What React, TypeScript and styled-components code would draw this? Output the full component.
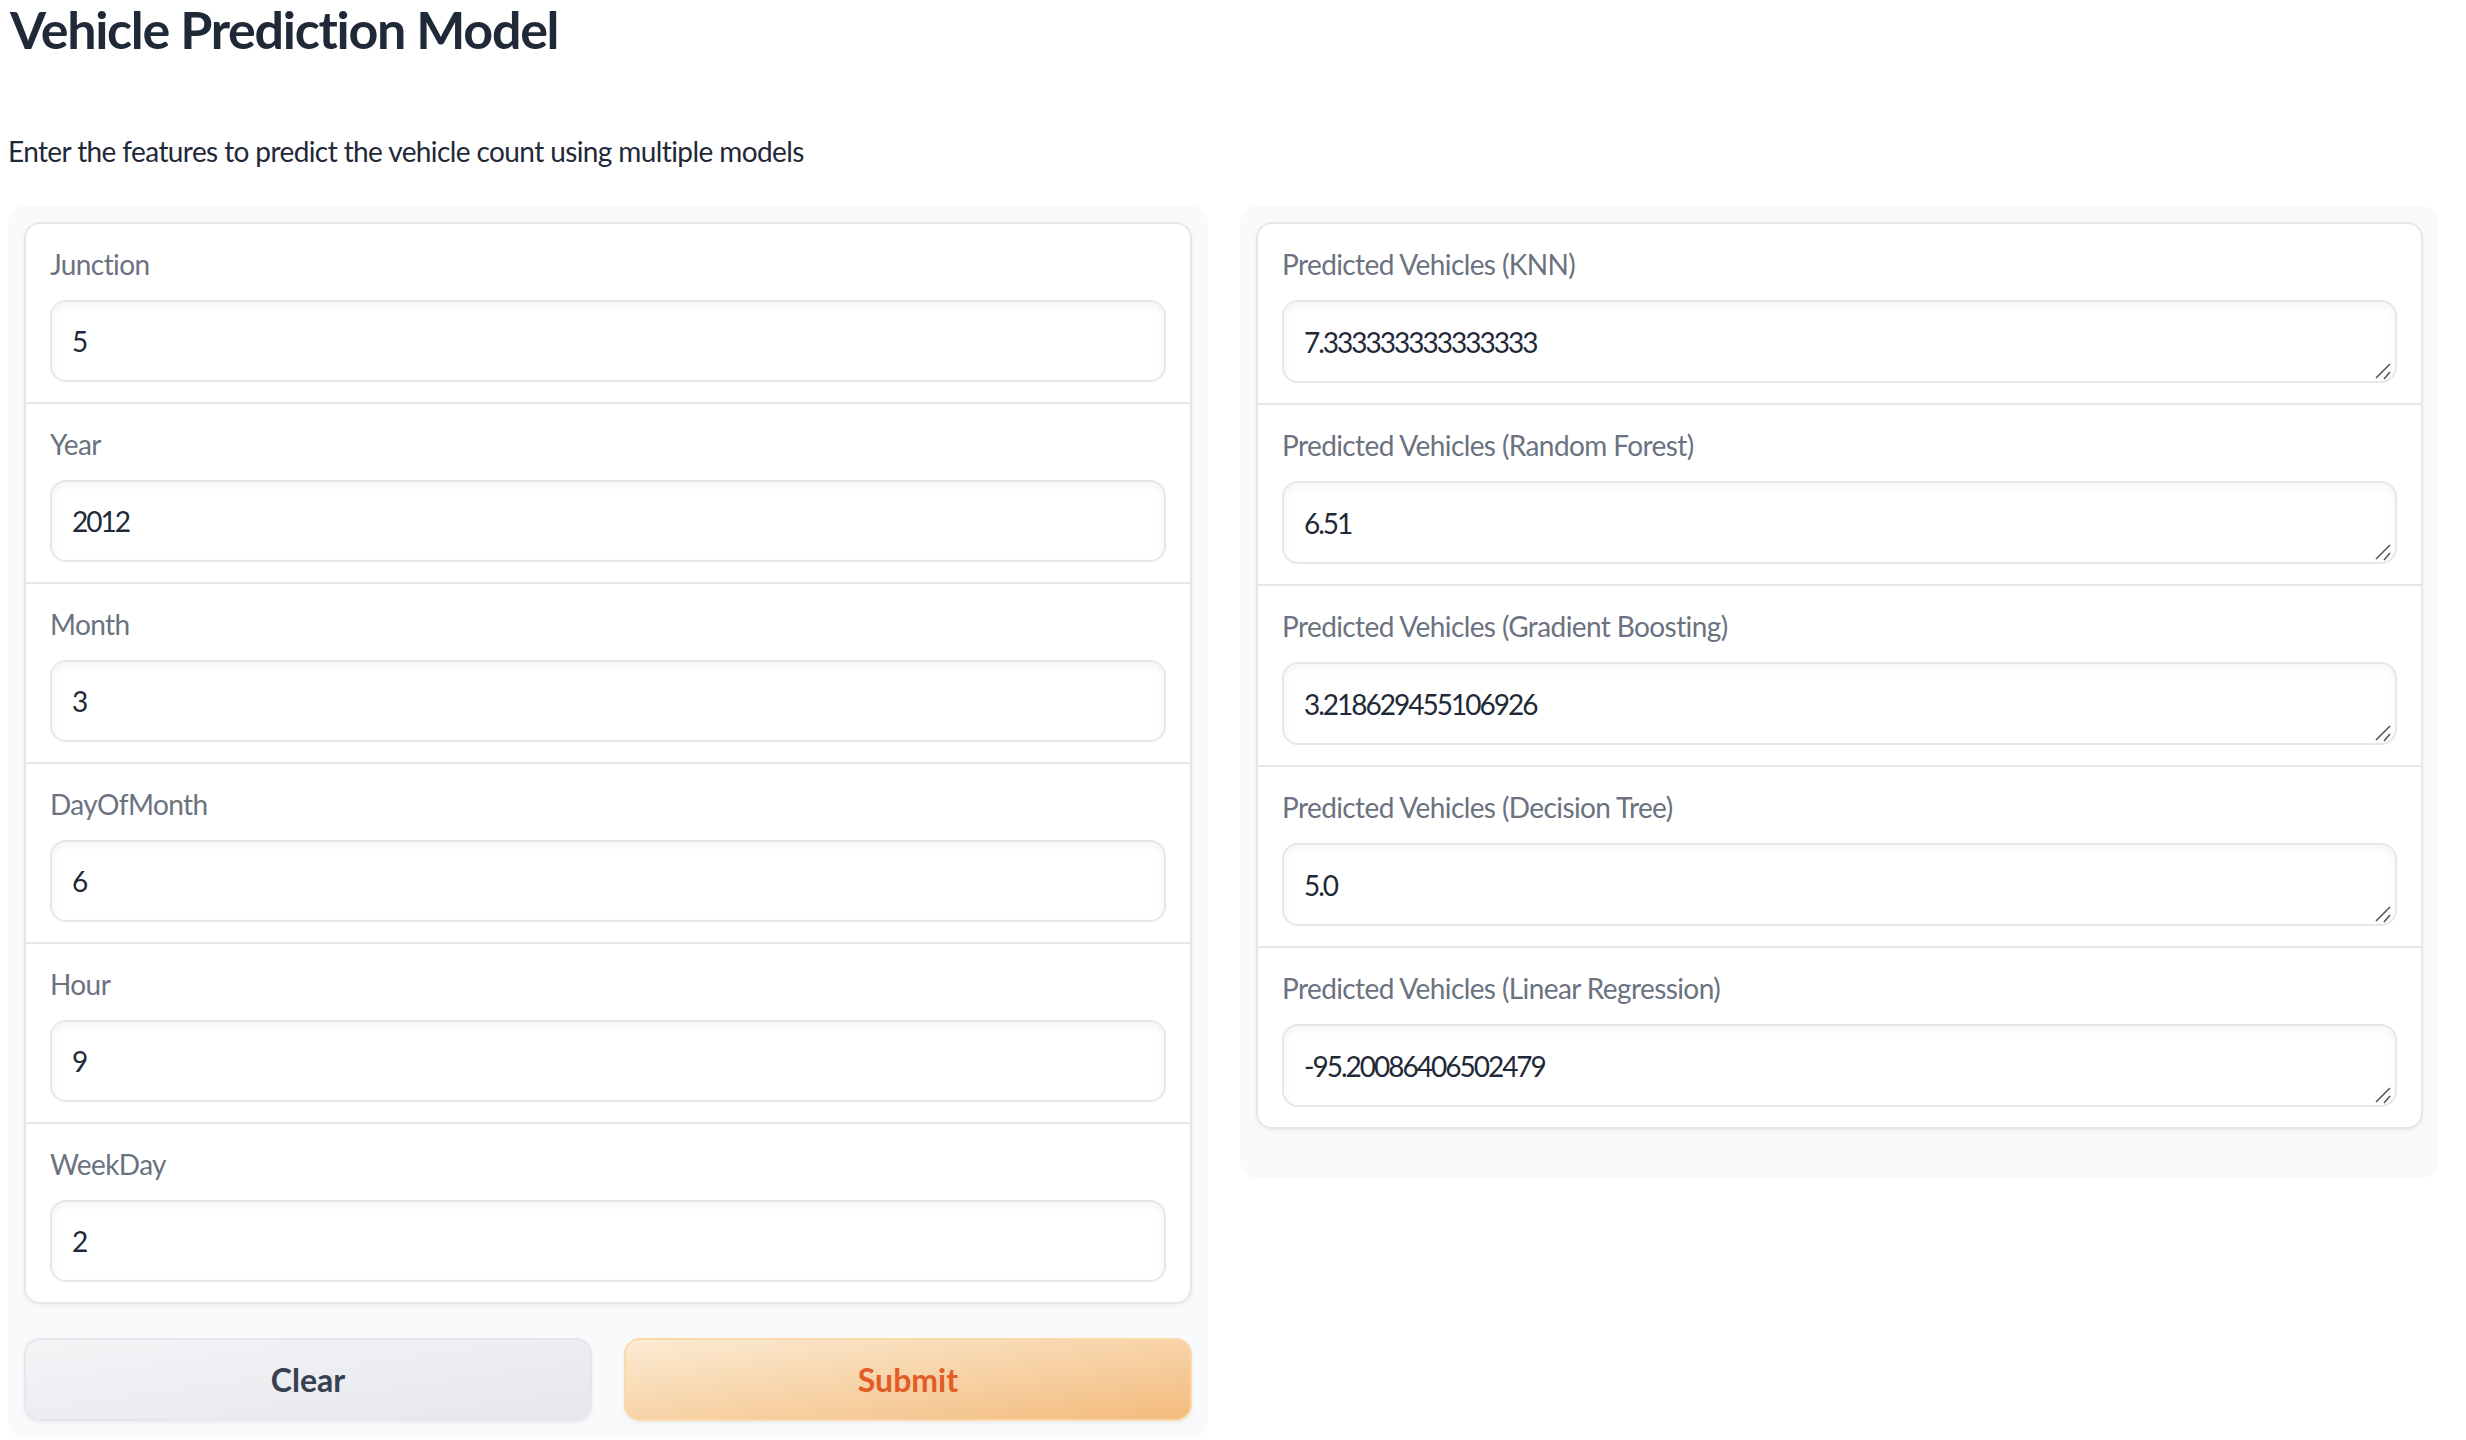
import React from "react";
import styled, { createGlobalStyle } from "styled-components";

const GlobalStyle = createGlobalStyle`
  body {
    margin: 0;
    background: #ffffff;
    font-family: "Lato", "Noto Sans", sans-serif;
    color: #1f2937;
  }
  * {
    box-sizing: border-box;
  }
`;

const Page = styled.div`
  padding: 0 27px 0 8px;
`;

const Title = styled.h1`
  margin: 0 0 0 2px;
  font-size: 52px;
  line-height: 58px;
  font-weight: 700;
  letter-spacing: -1.3px;
  color: #1f2937;
`;

const Description = styled.p`
  margin: 73px 0 35px;
  font-size: 28px;
  line-height: 40px;
  letter-spacing: -0.6px;
  color: #1f2937;
`;

const Columns = styled.div`
  display: grid;
  grid-template-columns: 1200px 1199px;
  gap: 32px;
  align-items: start;
`;

const Panel = styled.div<{ $bottom?: number }>`
  background: #f9fafb;
  border-radius: 16px;
  padding: 16px 16px ${(p) => p.$bottom ?? 16}px;
  display: flex;
  flex-direction: column;
  gap: 34px;
`;

const Card = styled.div`
  background: #ffffff;
  border: 2px solid #e5e7eb;
  border-radius: 16px;
  box-shadow: 0 2px 4px rgba(0, 0, 0, 0.05);
  overflow: hidden;
`;

const Field = styled.div`
  padding: 20px 24px;
  & + & {
    border-top: 2px solid #e5e7eb;
  }
`;

const Label = styled.div`
  font-size: 28px;
  line-height: 40px;
  letter-spacing: -0.6px;
  color: #6b7280;
  margin-bottom: 16px;
`;

const inputLook = `
  display: block;
  width: 100%;
  border: 2px solid #e5e7eb;
  border-radius: 16px;
  background: #ffffff;
  box-shadow: inset 0 4px 8px rgba(0, 0, 0, 0.04);
  font-family: "Lato", "Noto Sans", sans-serif;
  font-size: 28px;
  line-height: 40px;
  letter-spacing: -2px;
  color: #1f2937;
  outline: none;
`;

const TextInput = styled.input`
  ${inputLook}
  height: 82px;
  padding: 0 20px;
`;

const AreaWrap = styled.div`
  position: relative;
`;

const Area = styled.textarea`
  ${inputLook}
  height: 83px;
  padding: 20px 20px 19px;
  resize: none;
  overflow: hidden;
`;

const Grip = styled.svg`
  position: absolute;
  right: 3px;
  bottom: 2px;
  width: 20px;
  height: 20px;
  pointer-events: none;
`;

const Buttons = styled.div`
  display: grid;
  grid-template-columns: 1fr 1fr;
  gap: 32px;
`;

const Button = styled.button<{ $primary?: boolean }>`
  height: 83px;
  border-radius: 16px;
  border: 2px solid ${(p) => (p.$primary ? "#fbd9ab" : "#e5e7eb")};
  background: ${(p) =>
    p.$primary
      ? "linear-gradient(to bottom right, #fcebd3, #f3bb7d)"
      : "linear-gradient(to bottom right, #f3f4f6, #e5e7eb)"};
  color: ${(p) => (p.$primary ? "#e35b25" : "#374151")};
  box-shadow: 0 2px 4px rgba(0, 0, 0, 0.06);
  font-family: "Lato", "Noto Sans", sans-serif;
  font-size: 32px;
  font-weight: 700;
  cursor: pointer;
`;

const inputs = [
  { label: "Junction", value: "5" },
  { label: "Year", value: "2012" },
  { label: "Month", value: "3" },
  { label: "DayOfMonth", value: "6" },
  { label: "Hour", value: "9" },
  { label: "WeekDay", value: "2" },
];

const outputs = [
  { label: "Predicted Vehicles (KNN)", value: "7.333333333333333" },
  { label: "Predicted Vehicles (Random Forest)", value: "6.51" },
  { label: "Predicted Vehicles (Gradient Boosting)", value: "3.218629455106926" },
  { label: "Predicted Vehicles (Decision Tree)", value: "5.0" },
  { label: "Predicted Vehicles (Linear Regression)", value: "-95.20086406502479" },
];

const ResizeGrip = () => (
  <Grip viewBox="0 0 20 20">
    <line x1="2" y1="17" x2="16" y2="3" stroke="#555" strokeWidth="1.6" />
    <line x1="10" y1="18" x2="16" y2="11" stroke="#555" strokeWidth="1.6" />
  </Grip>
);

export default function App() {
  return (
    <Page>
      <GlobalStyle />
      <Title>Vehicle Prediction Model</Title>
      <Description>
        Enter the features to predict the vehicle count using multiple models
      </Description>
      <Columns>
        <Panel>
          <Card>
            {inputs.map((f) => (
              <Field key={f.label}>
                <Label>{f.label}</Label>
                <TextInput defaultValue={f.value} />
              </Field>
            ))}
          </Card>
          <Buttons>
            <Button>Clear</Button>
            <Button $primary>Submit</Button>
          </Buttons>
        </Panel>
        <Panel $bottom={49}>
          <Card>
            {outputs.map((f) => (
              <Field key={f.label}>
                <Label>{f.label}</Label>
                <AreaWrap>
                  <Area readOnly rows={1} defaultValue={f.value} />
                  <ResizeGrip />
                </AreaWrap>
              </Field>
            ))}
          </Card>
        </Panel>
      </Columns>
    </Page>
  );
}
